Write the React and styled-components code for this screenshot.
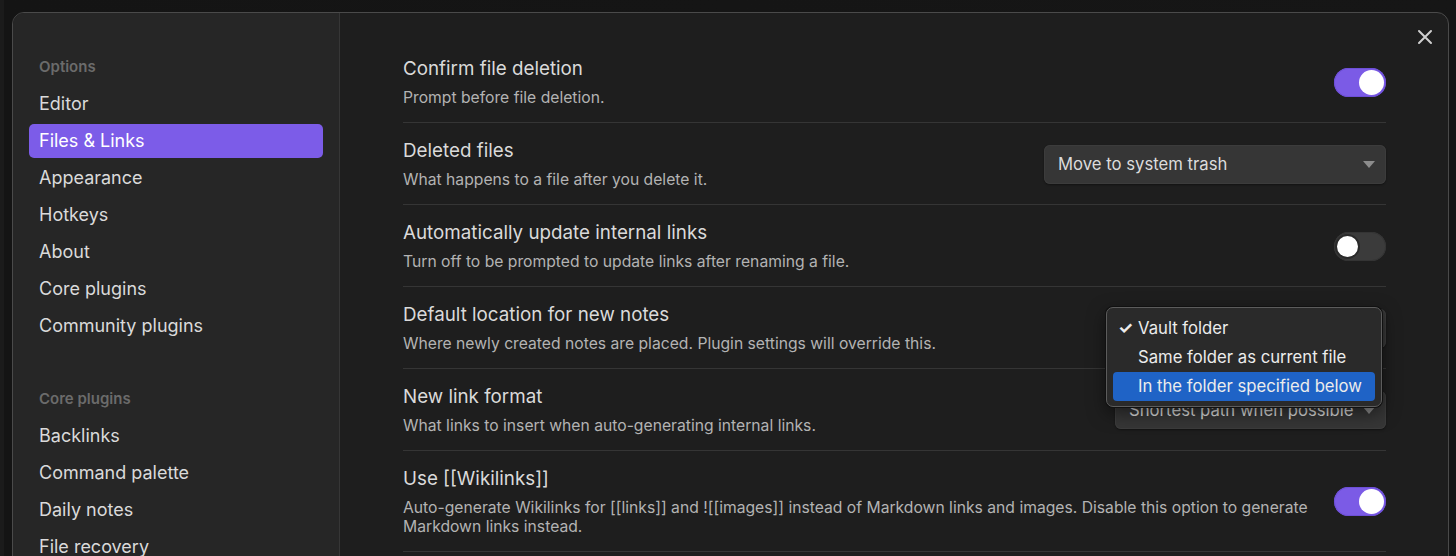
import React from "react";
import styled, { createGlobalStyle } from "styled-components";

const GlobalStyle = createGlobalStyle`
  html, body { margin: 0; padding: 0; }
  body {
    background: #161616;
    font-family: Inter, "Noto Sans", "Liberation Sans", sans-serif;
    overflow: hidden;
    -webkit-font-smoothing: antialiased;
  }
`;

const Page = styled.div`
  height: 556px;
  padding: 12px 0 0 12px;
  box-sizing: border-box;
  overflow: hidden;
  background: linear-gradient(to right, #1b1b1b 0, #1b1b1b 4px, #141414 4px, #161616 100%);
`;

const Modal = styled.div`
  position: relative;
  display: flex;
  width: 1437px;
  height: 600px;
  box-sizing: border-box;
  border: 1px solid #4a4a4a;
  border-radius: 12px;
  background: #1e1e1e;
  overflow: hidden;
`;

const Sidebar = styled.nav`
  width: 327px;
  flex: none;
  box-sizing: border-box;
  background: #262626;
  border-right: 1px solid #363636;
  padding: 44px 16px 0 16px;
  display: flex;
  flex-direction: column;
`;

const NavHeader = styled.div`
  font-size: 15px;
  font-weight: 600;
  line-height: 20px;
  color: #6b6b6b;
  padding-left: 10px;
  margin-top: ${(p) => (p.$first ? "0" : "43px")};
  margin-bottom: 10px;
`;

const NavItem = styled.div`
  height: 34px;
  line-height: 34px;
  padding-left: 10px;
  margin-bottom: 3px;
  font-size: 18px;
  color: ${(p) => (p.$active ? "#ffffff" : "#dadada")};
  background: ${(p) => (p.$active ? "#7c5ce8" : "transparent")};
  border-radius: 5px;
  white-space: nowrap;
`;

const Content = styled.main`
  flex: 1;
  padding: 28px 62px 0 63px;
  display: flex;
  flex-direction: column;
`;

const Row = styled.div`
  display: flex;
  align-items: center;
  padding: 16px 0 15px;
  border-top: ${(p) => (p.$first ? "none" : "1px solid #353535")};
`;

const Info = styled.div`
  flex: 1;
  padding-right: 24px;
`;

const Title = styled.div`
  font-size: 18.8px;
  line-height: 24px;
  color: #dadada;
  margin-bottom: 7px;
`;

const Desc = styled.div`
  font-size: 15.7px;
  line-height: 19px;
  color: #b3b3b3;
`;

const Toggle = styled.div`
  position: relative;
  width: 52px;
  height: 29px;
  flex: none;
  box-sizing: border-box;
  border-radius: 15px;
  background: ${(p) => (p.$on ? "#7b5be6" : "#3b3b3b")};
  box-shadow: inset 0 0 0 1px ${(p) => (p.$on ? "#6d4fd6" : "#343434")};
`;

const Knob = styled.div`
  position: absolute;
  top: 2px;
  left: ${(p) => (p.$on ? "25px" : "1px")};
  width: 25px;
  height: 25px;
  border-radius: 50%;
  background: #ffffff;
  box-sizing: border-box;
  border: ${(p) => (p.$on ? "none" : "2px solid #2a2a2a")};
`;

const SelectWrap = styled.div`
  position: relative;
  flex: none;
`;

const Select = styled.div`
  width: ${(p) => p.$w}px;
  height: ${(p) => p.$h || 39}px;
  box-sizing: border-box;
  display: flex;
  align-items: center;
  justify-content: space-between;
  padding: 0 11px 0 14px;
  background: #363636;
  border-radius: 6px;
  box-shadow: 0 1px 2px rgba(0, 0, 0, 0.4), inset 0 0 0 1px #3c3c3c;
  font-size: 16.7px;
  color: #dcdcdc;
  white-space: nowrap;
`;

const Caret = styled.span`
  width: 0;
  height: 0;
  border-left: 6px solid transparent;
  border-right: 6px solid transparent;
  border-top: 7px solid #8c8c8c;
`;

const Menu = styled.div`
  position: absolute;
  left: -9px;
  top: -2px;
  width: 276px;
  box-sizing: border-box;
  padding: 6px 6px 5px 6px;
  background: #2a2a2a;
  border: 1px solid #5c5c5c;
  border-radius: 7px;
  box-shadow: 0 0 0 1px #111, 0 6px 18px rgba(0, 0, 0, 0.5);
  z-index: 5;
`;

const MenuItem = styled.div`
  height: 29px;
  line-height: 29px;
  padding-left: 25px;
  position: relative;
  border-radius: 4px;
  font-size: 16.7px;
  color: #ececec;
  background: ${(p) => (p.$hl ? "#1f63c6" : "transparent")};
  white-space: nowrap;
`;

const Check = styled.span`
  position: absolute;
  left: 5px;
  top: 0;
  font-size: 17px;
  font-weight: 700;
`;

const CloseBtn = styled.div`
  position: absolute;
  top: 15px;
  right: 14px;
  width: 18px;
  height: 18px;
  display: flex;
  align-items: center;
  justify-content: center;
  color: #cfcfcf;
`;

function ToggleSwitch({ on }) {
  return (
    <Toggle $on={on}>
      <Knob $on={on} />
    </Toggle>
  );
}

function Dropdown({ value, w, h, children }) {
  return (
    <SelectWrap>
      <Select $w={w} $h={h}>
        <span>{value}</span>
        <Caret />
      </Select>
      {children}
    </SelectWrap>
  );
}

const optionItems = ["Editor", "Files & Links", "Appearance", "Hotkeys", "About", "Core plugins", "Community plugins"];
const pluginItems = ["Backlinks", "Command palette", "Daily notes", "File recovery", "Graph view"];

export default function App() {
  return (
    <>
      <GlobalStyle />
      <Page>
        <Modal>
          <Sidebar>
            <NavHeader $first>Options</NavHeader>
            {optionItems.map((t) => (
              <NavItem key={t} $active={t === "Files & Links"}>{t}</NavItem>
            ))}
            <NavHeader>Core plugins</NavHeader>
            {pluginItems.map((t) => (
              <NavItem key={t}>{t}</NavItem>
            ))}
          </Sidebar>
          <Content>
            <Row $first>
              <Info>
                <Title>Confirm file deletion</Title>
                <Desc>Prompt before file deletion.</Desc>
              </Info>
              <ToggleSwitch on />
            </Row>
            <Row>
              <Info>
                <Title>Deleted files</Title>
                <Desc>What happens to a file after you delete it.</Desc>
              </Info>
              <Dropdown value="Move to system trash" w={342} />
            </Row>
            <Row>
              <Info>
                <Title>Automatically update internal links</Title>
                <Desc>Turn off to be prompted to update links after renaming a file.</Desc>
              </Info>
              <ToggleSwitch on={false} />
            </Row>
            <Row>
              <Info>
                <Title>Default location for new notes</Title>
                <Desc>Where newly created notes are placed. Plugin settings will override this.</Desc>
              </Info>
              <Dropdown value="Vault folder" w={271} h={39}>
                <Menu>
                  <MenuItem><Check>✓</Check>Vault folder</MenuItem>
                  <MenuItem>Same folder as current file</MenuItem>
                  <MenuItem $hl>In the folder specified below</MenuItem>
                </Menu>
              </Dropdown>
            </Row>
            <Row>
              <Info>
                <Title>New link format</Title>
                <Desc>What links to insert when auto-generating internal links.</Desc>
              </Info>
              <Dropdown value="Shortest path when possible" w={271} h={38} />
            </Row>
            <Row>
              <Info>
                <Title>Use [[Wikilinks]]</Title>
                <Desc>
                  Auto-generate Wikilinks for [[links]] and ![[images]] instead of Markdown links and images. Disable this option to generate Markdown links instead.
                </Desc>
              </Info>
              <ToggleSwitch on />
            </Row>
            <Row>
              <Info>
                <Title>Detect all file extensions</Title>
                <Desc>Show files with any extension.</Desc>
              </Info>
              <ToggleSwitch on={false} />
            </Row>
          </Content>
          <CloseBtn>
            <svg width="16" height="16" viewBox="0 0 16 16" fill="none" stroke="currentColor" strokeWidth="2" strokeLinecap="round">
              <path d="M2 2 L14 14 M14 2 L2 14" />
            </svg>
          </CloseBtn>
        </Modal>
      </Page>
    </>
  );
}
